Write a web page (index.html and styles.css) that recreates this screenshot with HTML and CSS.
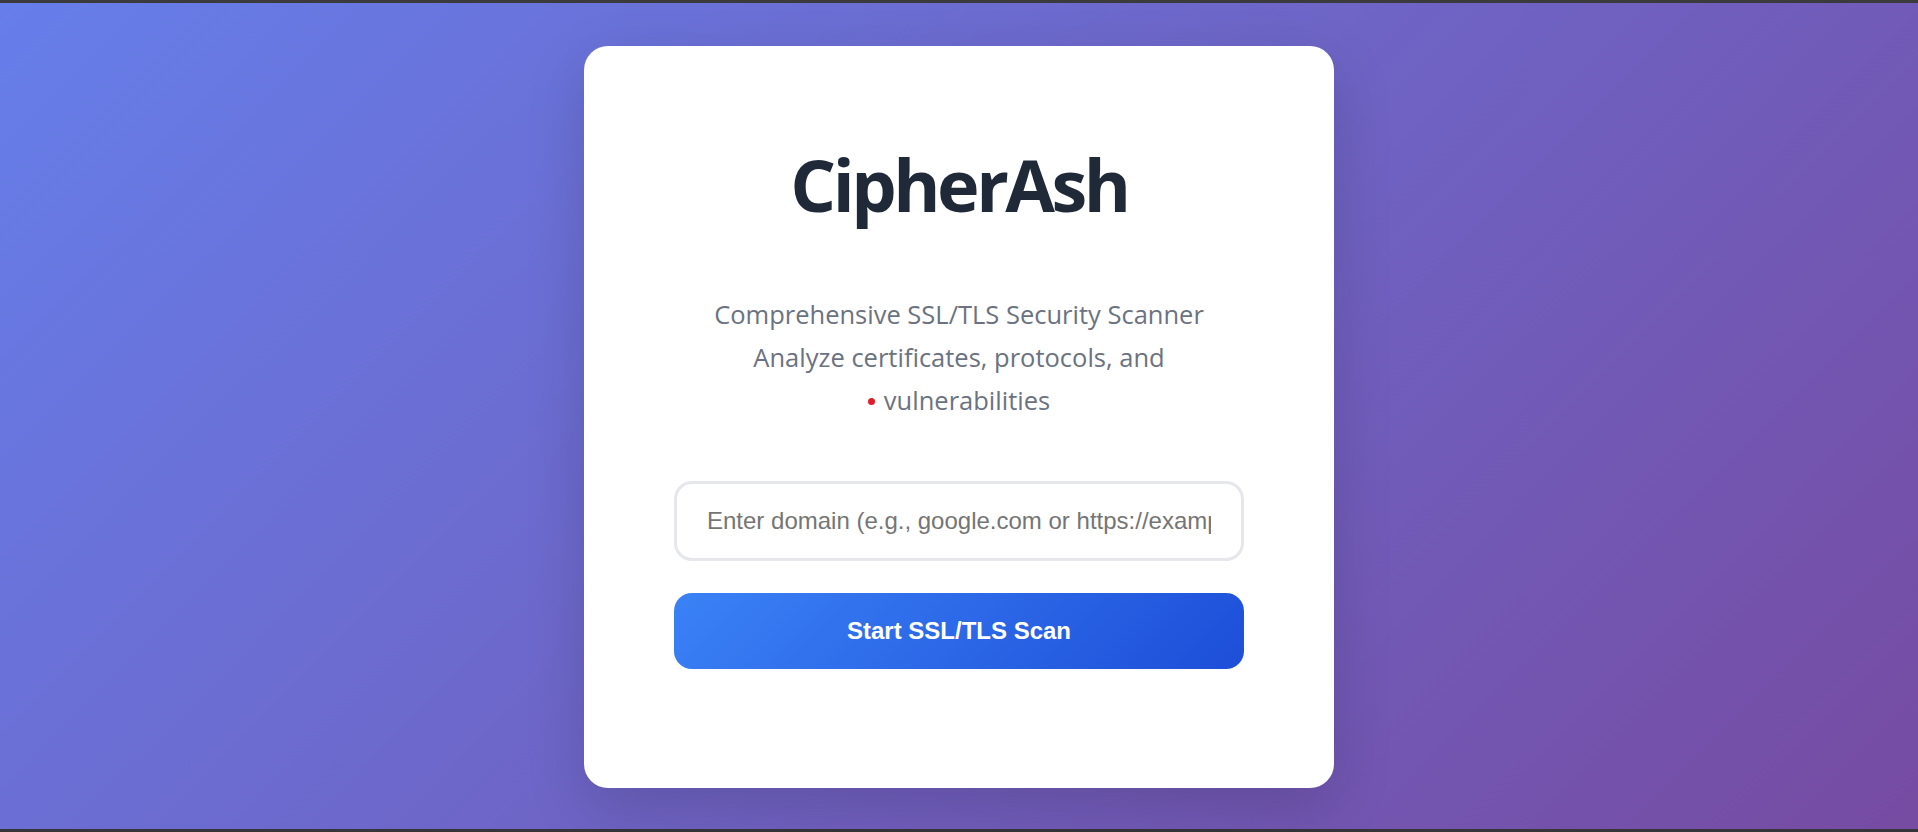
FILE: index.html
```html
<!DOCTYPE html>
<html lang="en">
<head>
<meta charset="utf-8">
<title>CipherAsh</title>
<link rel="stylesheet" href="styles.css">
</head>
<body>
<main class="page">
  <section class="card">
    <h1 class="title">CipherAsh</h1>
    <p class="subtitle">Comprehensive SSL/TLS Security Scanner<br>Analyze certificates, protocols, and<br><span class="dot"></span>vulnerabilities</p>
    <form class="scan-form">
      <input class="domain-input" type="text" placeholder="Enter domain (e.g., google.com or https://example.com)">
      <button class="scan-btn" type="button">Start SSL/TLS Scan</button>
    </form>
  </section>
</main>
</body>
</html>
```

FILE: styles.css
```css
* { box-sizing: border-box; }
html, body { margin: 0; padding: 0; height: 100%; }
body {
  background: #3a3a3c;
  font-family: "Open Sans", "Liberation Sans", sans-serif;
}
.page {
  height: 100%;
  border-top: 3px solid #3b3b3d;
  border-bottom: 3px solid #36363a;
  padding-top: 43px;
  background: linear-gradient(135deg, #667eea 0%, #764ba2 100%);
  display: flex;
  justify-content: center;
  align-items: flex-start;
}
.card {
  width: 750px;
  background: #ffffff;
  border-radius: 24px;
  padding: 102px 90px 119px;
  box-shadow: 0 20px 60px rgba(0, 0, 0, 0.15);
  text-align: center;
}
.title {
  margin: 0;
  font-size: 72px;
  line-height: 72px;
  font-weight: 700;
  color: #1f2937;
  letter-spacing: -3.5px;
}
.subtitle {
  margin: 73px 0 0;
  font-size: 25.5px;
  line-height: 43.2px;
  color: #6b7280;
  letter-spacing: 0;
}
.dot {
  display: inline-block;
  width: 7px;
  height: 7px;
  border-radius: 50%;
  background: #e11d2a;
  margin-right: 9px;
  vertical-align: 5px;
}
.scan-form {
  margin-top: 58px;
  display: flex;
  flex-direction: column;
  gap: 32px;
}
.domain-input {
  width: 100%;
  height: 80px;
  border: 3px solid #e5e7eb;
  border-radius: 18px;
  padding: 0 30px;
  font-family: "Liberation Sans", Arial, sans-serif;
  font-size: 24px;
  color: #111827;
  background: #fff;
  outline: none;
}
.domain-input::placeholder { color: #757575; }
.scan-btn {
  width: 100%;
  height: 76px;
  border: none;
  border-radius: 18px;
  background: linear-gradient(135deg, #3b82f6 0%, #1d4ed8 100%);
  color: #ffffff;
  font-family: "Liberation Sans", Arial, sans-serif;
  font-size: 24px;
  font-weight: 700;
  cursor: pointer;
}
```
